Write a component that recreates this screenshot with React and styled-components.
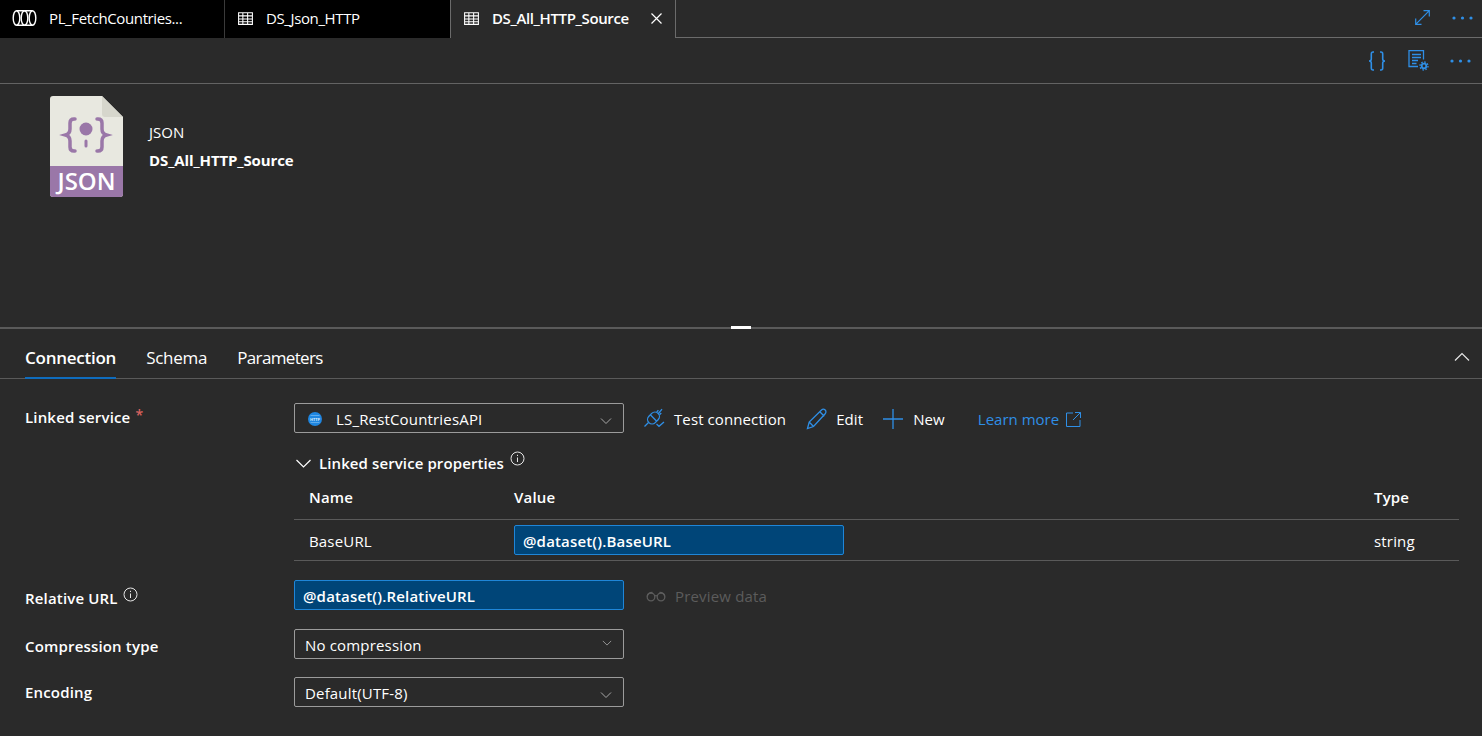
import React from 'react';
import styled, { createGlobalStyle } from 'styled-components';

const GlobalStyle = createGlobalStyle`
  html, body {
    margin: 0;
    padding: 0;
    height: 100%;
    overflow: hidden;
    background: #2a2a2a;
  }
  body {
    font-family: "Open Sans", "Noto Sans", "Liberation Sans", sans-serif;
    font-size: 15px;
    letter-spacing: 0.17px;
    color: #fff;
  }
`;

const Page = styled.div`
  width: 1482px;
  height: 736px;
  display: flex;
  flex-direction: column;
  background: #2a2a2a;
  overflow: hidden;
`;

const TabBar = styled.div`
  height: 38px;
  flex: none;
  display: flex;
  background: #000;
`;

const Tab = styled.div`
  width: ${props => props.$width}px;
  flex: none;
  display: flex;
  align-items: center;
  padding: 0 0 2px 12px;
  box-sizing: border-box;
  gap: 12px;
  letter-spacing: -0.38px;
  background: ${props => (props.$active ? '#2a2a2a' : '#000')};
  border-right: 1px solid ${props => (props.$active ? '#6b6b6b' : '#3a3a3a')};
  font-weight: ${props => (props.$active ? 600 : 400)};
  box-shadow: ${props => (props.$active ? '-1px 0 0 #6b6b6b' : 'none')};
  svg { flex: none; }
`;

const TabClose = styled.span`
  display: flex;
  margin-left: 10px;
`;

const TabRest = styled.div`
  flex: 1;
  display: flex;
  align-items: center;
  justify-content: flex-end;
  gap: 22px;
  padding: 0 9px 2px 0;
  background: #2a2a2a;
  border-bottom: 1px solid #6b6b6b;
`;

const Toolbar = styled.div`
  height: 46px;
  flex: none;
  box-sizing: border-box;
  display: flex;
  align-items: center;
  justify-content: flex-end;
  gap: 21px;
  padding: 0 11px 0 0;
  border-bottom: 1px solid #636363;
`;

const Canvas = styled.div`
  height: 243px;
  flex: none;
  box-sizing: border-box;
  display: flex;
  align-items: flex-start;
  padding: 12px 0 0 50px;
  gap: 26px;
`;

const CanvasText = styled.div`
  display: flex;
  flex-direction: column;
  padding-top: 27px;
  letter-spacing: 0;
`;

const CanvasType = styled.div`
  line-height: 19px;
  margin-bottom: 9px;
`;

const CanvasName = styled.div`
  line-height: 19px;
  font-weight: 700;
  letter-spacing: -0.1px;
`;

const Splitter = styled.div`
  height: 2px;
  flex: none;
  background: #5a5a5a;
  position: relative;
`;

const Handle = styled.span`
  position: absolute;
  left: 731px;
  top: -1px;
  width: 20px;
  height: 3px;
  background: #fff;
`;

const PanelTabs = styled.div`
  height: 50px;
  flex: none;
  box-sizing: border-box;
  display: flex;
  align-items: stretch;
  gap: 30px;
  padding: 0 12px 0 25px;
  border-bottom: 1px solid #5a5a5a;
`;

const PanelTab = styled.div`
  position: relative;
  display: flex;
  align-items: center;
  padding-top: 8px;
  font-size: 17px;
  letter-spacing: ${props => props.$spacing ?? -0.25}px;
  font-weight: ${props => (props.$active ? 600 : 400)};

  ${props => props.$active && `
    &:after {
      content: '';
      position: absolute;
      left: 0;
      right: 0;
      bottom: -1px;
      height: 2px;
      background: #0f6cbd;
    }
  `}
`;

const Collapse = styled.div`
  margin-left: auto;
  display: flex;
  align-items: center;
  padding-top: 6px;
`;

const Form = styled.div`
  flex: 1;
  display: flex;
  flex-direction: column;
  padding: 24px 23px 0 25px;
`;

const Row = styled.div`
  display: flex;
  align-items: flex-start;
  margin-bottom: ${props => props.$gap || 0}px;
`;

const Label = styled.div`
  width: 269px;
  flex: none;
  display: flex;
  align-items: center;
  gap: 5px;
  font-weight: 600;
  line-height: 20px;
  padding-top: ${props => props.$top || 5}px;
`;

const Star = styled.span`
  color: #d9625f;
  font-size: 14px;
  margin-top: -4px;
`;

const Select = styled.div`
  width: 330px;
  height: 30px;
  flex: none;
  box-sizing: border-box;
  border: 1px solid #9b9b9b;
  border-radius: 2px;
  display: flex;
  align-items: center;
  padding: 0 11px 0 ${props => props.$pad || 10}px;
`;

const SelectText = styled.span`
  flex: 1;
  display: flex;
  align-items: center;
  gap: 14px;
  padding-top: 2px;
`;

const ChevronSlot = styled.span`
  display: flex;
  margin-top: ${props => props.$shift}px;
`;

const Actions = styled.div`
  display: flex;
  align-items: center;
  height: 30px;
  box-sizing: border-box;
  padding-top: 2px;
  margin-left: 20px;
`;

const Action = styled.div`
  display: flex;
  align-items: center;
  gap: 8px;
  letter-spacing: 0.1px;
  margin-right: ${props => props.$gap}px;
`;

const LearnMore = styled.div`
  display: flex;
  align-items: center;
  gap: 7px;
  color: #2f8fe6;
  letter-spacing: 0;
`;

const Nested = styled.div`
  margin-left: 269px;
  margin-bottom: 19px;
`;

const Expander = styled.div`
  height: 45px;
  display: flex;
  align-items: center;
  font-weight: 600;
  letter-spacing: 0.1px;
  padding: 15px 0 0 2px;
  box-sizing: border-box;
`;

const ExpanderLabel = styled.span`
  margin: 0 6px 0 8px;
`;

const InfoUp = styled.span`
  display: flex;
  margin-top: ${props => props.$shift || -7}px;
`;

const TableHead = styled.div`
  display: grid;
  grid-template-columns: 205px 860px 1fr;
  height: 42px;
  box-sizing: border-box;
  align-items: center;
  padding: 0 0 3px 15px;
  font-weight: 600;
  border-bottom: 1px solid #5a5a5a;
`;

const TableRow = styled.div`
  display: grid;
  grid-template-columns: 205px 860px 1fr;
  height: 41px;
  box-sizing: border-box;
  align-items: center;
  padding-left: 15px;
  border-bottom: 1px solid #5a5a5a;
`;

const TableCell = styled.span`
  padding-top: 2px;
`;

const ExprInput = styled.div`
  width: 330px;
  height: 30px;
  box-sizing: border-box;
  background: #004578;
  border: 1px solid #1f86d8;
  border-radius: 2px;
  display: flex;
  align-items: center;
  padding: 2px 0 0 8px;
  font-weight: 600;
`;

const Preview = styled.div`
  display: flex;
  align-items: center;
  gap: 9px;
  height: 30px;
  box-sizing: border-box;
  padding-top: 2px;
  margin-left: 22px;
  color: #5c5c5c;
`;

const Stroke = ({ size = 16, vb = 16, color = '#fff', width = 1, children }) => (
  <svg width={size} height={size} viewBox={`0 0 ${vb} ${vb}`} fill="none" stroke={color} strokeWidth={width}>
    {children}
  </svg>
);

const GridIcon = () => (
  <Stroke size={17}>
    <path d="M1.500 2.500h13v11h-13zM1.500 5.500h13M1.500 8.500h13M1.500 11h13M5.500 2.500v11M10 2.500v11" />
  </Stroke>
);

const PipelineIcon = () => (
  <svg width="25" height="18" viewBox="0 0 25 18" fill="none" stroke="#fff" strokeWidth="1.400">
    <ellipse cx="4.500" cy="9" rx="3.300" ry="7.300" />
    <ellipse cx="20.500" cy="9" rx="3.300" ry="7.300" />
    <ellipse cx="12.500" cy="9" rx="3.300" ry="7.300" />
    <path d="M4.500 1.700h16M4.500 16.300h16" />
  </svg>
);

const Dots = () => (
  <svg width="21" height="4" viewBox="0 0 21 4" fill="#2f8fe6">
    <circle cx="2" cy="2" r="1.600" />
    <circle cx="10.500" cy="2" r="1.600" />
    <circle cx="19" cy="2" r="1.600" />
  </svg>
);

const Chevron = ({ size = 12 }) => (
  <Stroke size={size} vb={12} color="#a8a8a8">
    <path d="M1 3.500 6 8.500 11 3.500" />
  </Stroke>
);

const Info = () => (
  <Stroke size={15} vb={15} color="#e6e6e6">
    <circle cx="7.500" cy="7.500" r="6.500" />
    <path d="M7.500 6.500v4.500M7.500 3.800v1.200" />
  </Stroke>
);

const JsonFile = () => (
  <svg width="73" height="101" viewBox="0 0 73 101">
    <path d="M3 0h49l21 21v77a3 3 0 0 1-3 3H3a3 3 0 0 1-3-3V3a3 3 0 0 1 3-3z" fill="#e8e8e0" />
    <path d="M52 0l21 21H55a3 3 0 0 1-3-3z" fill="#d6d6cc" />
    <path d="M0 70h73v28a3 3 0 0 1-3 3H3a3 3 0 0 1-3-3z" fill="#9a77a8" />
    <path d="M25 23h-1c-3 0-4 2-4 4v6c0 3-1 5-4.500 6 3.500 1 4.500 3 4.500 6v6c0 2 1 4 4 4h1M47 23h1c3 0 4 2 4 4v6c0 3 1 5 4.500 6-3.500 1-4.500 3-4.500 6v6c0 2-1 4-4 4h-1" fill="none" stroke="#9a77a8" strokeWidth="3.500" strokeLinecap="round" />
    <circle cx="36" cy="33" r="6.500" fill="#9a77a8" />
    <path d="M36 45v5" stroke="#9a77a8" strokeWidth="3" strokeLinecap="round" />
    <text x="36.500" y="94" textAnchor="middle" fontSize="24" fontWeight="600" fill="#fff" fontFamily="Open Sans, sans-serif" letterSpacing="0">JSON</text>
  </svg>
);

const HttpBadge = () => (
  <svg width="14" height="14" viewBox="0 0 14 14">
    <circle cx="7" cy="7" r="7" fill="#1f86e0" />
    <path d="M2.500 3.500h9M2.500 10.500h9" stroke="#6fb6f0" strokeWidth="0.800" />
    <text x="7" y="8.500" textAnchor="middle" fontSize="4" fontWeight="700" fill="#d6ebfb" fontFamily="Open Sans, sans-serif" letterSpacing="0">HTTP</text>
  </svg>
);

const PlugIcon = () => (
  <Stroke size={22} vb={22} color="#2f8fe6" width={1.300}>
    <path d="M.5 18.500 4.500 14.500M14 6l4-4.800" />
    <g transform="rotate(45 9.500 10)">
      <rect x="5" y="3.500" width="9" height="13" rx="4.500" />
      <path d="M5 10h9M7.500 3.500V1M11.500 3.500V1" />
    </g>
    <path d="M12.500 16 15 18.300l5-4.300" />
  </Stroke>
);

const PencilIcon = () => (
  <Stroke size={22} vb={22} color="#2f8fe6" width={1.300}>
    <path d="M1.500 20.500l1.700-6.500L15.500 2c1-1 2.700-1 3.700 0s1 2.700 0 3.700L7.500 18.500zM3.200 14l4.300 4.500M13.800 3.700l4.500 4.500" />
  </Stroke>
);

const PlusIcon = () => (
  <Stroke size={22} vb={22} color="#2f8fe6" width={1.300}>
    <path d="M10 1v20M0 11h20" />
  </Stroke>
);

const ExternalIcon = () => (
  <Stroke size={15} vb={15} color="#2f8fe6">
    <path d="M7 1H.5v13.500h13.500V8M9 .5h5.500V6M14.500 .5 7 8" />
  </Stroke>
);

const GlassesIcon = () => (
  <Stroke size={20} vb={20} color="#5c5c5c" width={1.300}>
    <circle cx="5" cy="11" r="3.800" />
    <circle cx="15" cy="11" r="3.800" />
    <path d="M8.500 10c1-.6 2-.6 3 0M1.200 10.500C1.500 8 3.500 6.500 6.500 6.500M18.800 10.500C18.500 8 16.500 6.500 13.500 6.500" />
  </Stroke>
);

const ExpandIcon = () => (
  <Stroke size={15} vb={15} color="#2f8fe6" width={1.200}>
    <path d="M.7 14.300 14.300 .7M8.500 .7h5.800v5.800M.7 8.500v5.800h5.800" />
  </Stroke>
);

const BracesIcon = () => (
  <Stroke size={20} vb={20} color="#2f8fe6" width={1.600}>
    <path d="M7 1H6C4.800 1 4.300 2 4.300 3v5C4.300 9 3.500 10 2 10c1.500 0 2.300 1 2.300 2v5c0 1 .5 2 1.700 2h1M13 1h1c1.200 0 1.700 1 1.700 2v5c0 1 .8 2 2.300 2-1.500 0-2.300 1-2.300 2v5c0 1-.5 2-1.700 2h-1" />
  </Stroke>
);

const PropsIcon = () => (
  <Stroke size={21} vb={21} color="#2f8fe6" width={1.300}>
    <path d="M10 16.500H1v-16h14.500v9M4 4.500h9M4 7.500h9M4 10.500h6M4 13.500h4.500" />
    <circle cx="16" cy="16" r="2.300" strokeWidth="1.800" />
    <circle cx="16" cy="16" r="4" strokeWidth="1.300" strokeDasharray="1.600 1.500" />
  </Stroke>
);

const App = () => (
  <Page>
    <GlobalStyle />
    <TabBar>
      <Tab $width={225}>
        <PipelineIcon />
        <span>PL_FetchCountries...</span>
      </Tab>
      <Tab $width={226}>
        <GridIcon />
        <span>DS_Json_HTTP</span>
      </Tab>
      <Tab $width={225} $active>
        <GridIcon />
        <span>DS_All_HTTP_Source</span>
        <TabClose>
          <Stroke size={11} vb={11} width={1.200}>
            <path d="M.5.500l10 10M10.500.500l-10 10" />
          </Stroke>
        </TabClose>
      </Tab>
      <TabRest>
        <ExpandIcon />
        <Dots />
      </TabRest>
    </TabBar>
    <Toolbar>
      <BracesIcon />
      <PropsIcon />
      <Dots />
    </Toolbar>
    <Canvas>
      <JsonFile />
      <CanvasText>
        <CanvasType>JSON</CanvasType>
        <CanvasName>DS_All_HTTP_Source</CanvasName>
      </CanvasText>
    </Canvas>
    <Splitter>
      <Handle />
    </Splitter>
    <PanelTabs>
      <PanelTab $active>Connection</PanelTab>
      <PanelTab>Schema</PanelTab>
      <PanelTab $spacing={-0.65}>Parameters</PanelTab>
      <Collapse>
        <Stroke size={16} vb={16} color="#e6e6e6" width={1.200}>
          <path d="M1 11.500 8 4.500l7 7" />
        </Stroke>
      </Collapse>
    </PanelTabs>
    <Form>
      <Row>
        <Label $top={4}>
          Linked service <Star>*</Star>
        </Label>
        <Select $pad={13}>
          <SelectText>
            <HttpBadge />
            LS_RestCountriesAPI
          </SelectText>
          <ChevronSlot $shift={6}>
            <Chevron />
          </ChevronSlot>
        </Select>
        <Actions>
          <Action $gap={20}>
            <PlugIcon />
            Test connection
          </Action>
          <Action $gap={20}>
            <PencilIcon />
            Edit
          </Action>
          <Action $gap={33}>
            <PlusIcon />
            New
          </Action>
          <LearnMore>
            Learn more
            <ExternalIcon />
          </LearnMore>
        </Actions>
      </Row>
      <Nested>
        <Expander>
          <Stroke size={15} vb={15} color="#fff" width={1.200}>
            <path d="M.5 4l7 7 7-7" />
          </Stroke>
          <ExpanderLabel>Linked service properties</ExpanderLabel>
          <InfoUp $shift={-9}>
            <Info />
          </InfoUp>
        </Expander>
        <TableHead>
          <span>Name</span>
          <span>Value</span>
          <span>Type</span>
        </TableHead>
        <TableRow>
          <TableCell>BaseURL</TableCell>
          <ExprInput>@dataset().BaseURL</ExprInput>
          <TableCell>string</TableCell>
        </TableRow>
      </Nested>
      <Row $gap={19}>
        <Label $top={8}>
          Relative URL
          <InfoUp>
            <Info />
          </InfoUp>
        </Label>
        <ExprInput>@dataset().RelativeURL</ExprInput>
        <Preview>
          <GlassesIcon />
          Preview data
        </Preview>
      </Row>
      <Row $gap={18}>
        <Label $top={7}>Compression type</Label>
        <Select>
          <SelectText>No compression</SelectText>
          <ChevronSlot $shift={-3}>
            <Chevron size={10} />
          </ChevronSlot>
        </Select>
      </Row>
      <Row>
        <Label $top={5}>Encoding</Label>
        <Select>
          <SelectText>Default(UTF-8)</SelectText>
          <ChevronSlot $shift={5}>
            <Chevron />
          </ChevronSlot>
        </Select>
      </Row>
    </Form>
  </Page>
);

export default App;
